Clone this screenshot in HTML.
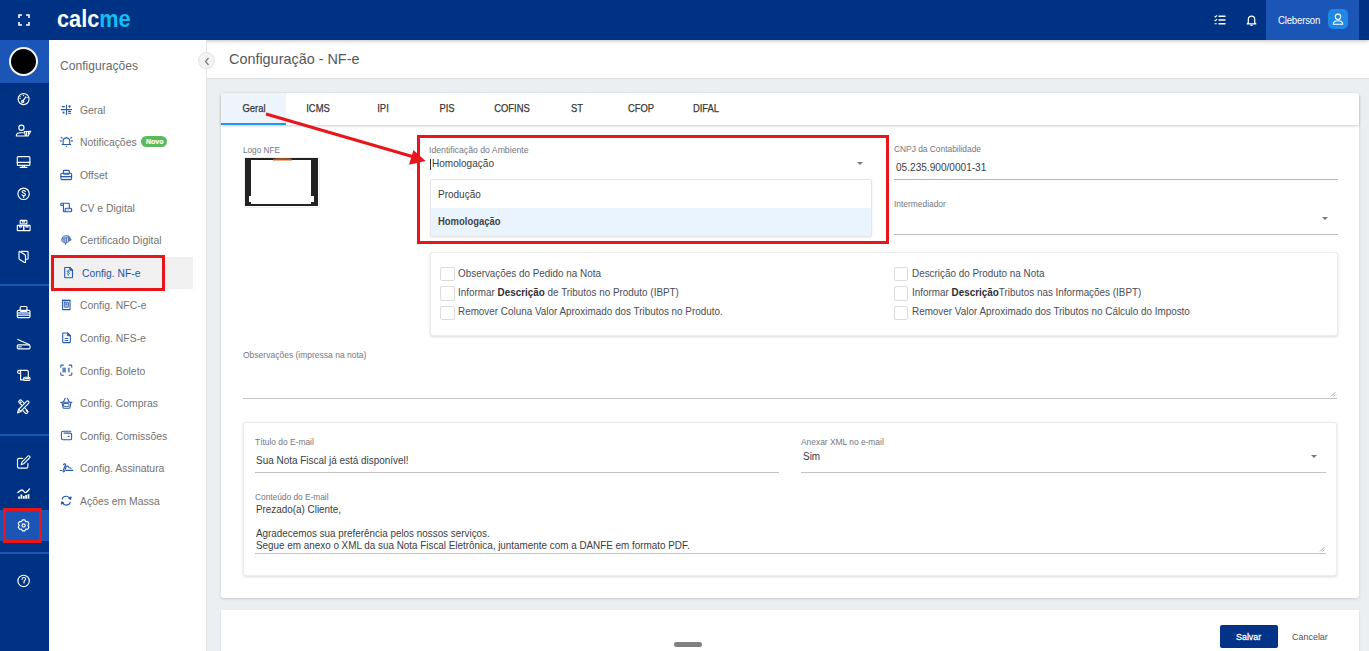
<!DOCTYPE html>
<html><head><meta charset="utf-8"><title>calcme</title><style>
*{margin:0;padding:0;box-sizing:border-box}
html,body{width:1369px;height:651px;overflow:hidden;background:#eceff1;font-family:"Liberation Sans",sans-serif}
.abs{position:absolute}
.t{position:absolute;white-space:nowrap;line-height:1;transform-origin:0 0}
#topbar{position:absolute;left:0;top:0;width:1369px;height:40px;background:#003283;box-shadow:0 1px 4px rgba(0,0,0,0.25)}
#rail{position:absolute;left:0;top:40px;width:49px;height:611px;background:#003283}
#sidebar{position:absolute;left:49px;top:40px;width:157.5px;height:611px;background:#fff;border-right:1px solid #e4e4e4}
#mainhead{position:absolute;left:206.5px;top:40px;width:1163px;height:39px;background:#fff;border-bottom:1px solid #dde1e4}
#card{background:#fff;border-radius:3px;box-shadow:0 1px 3px rgba(0,0,0,0.15)}
.box{background:#fff;border:1px solid #ececec;border-radius:3px;box-shadow:0 1px 3px rgba(0,0,0,0.14)}
.cb{width:14.6px;height:14.2px;border:1px solid #dcdcdc;border-radius:2px;background:#fff}
.arrow{position:absolute;width:0;height:0;border-left:3.5px solid transparent;border-right:3.5px solid transparent;border-top:3.5px solid #777}
b{font-weight:700;color:#2c2f36}
</style></head>
<body>
<div id="mainhead"></div>
<div id="topbar"></div><svg class="abs" style="left:17px;top:13px" width="14" height="14" viewBox="0 0 14 14" fill="none" stroke="#fff" stroke-width="1.6"><path d="M2 5V2h3M9 2h3v3M12 9v3H9M5 12H2V9"/></svg><div class="t" style="left:56.9px;top:7.08px;font-size:24px;font-weight:700;color:#fff;line-height:1;transform:scaleX(0.905);transform-origin:0 0">calc<span style="color:#12bff5">me</span></div><svg class="abs" style="left:1213.5px;top:15px" width="12" height="10" viewBox="0 0 12 10" fill="none" stroke="#fff" stroke-width="1.3"><path d="M4.5 1.2h7M4.5 5h7M4.5 8.8h7" stroke-width="1.6"/><path d="M.6 1.1l.9.9 1.5-1.6M.6 4.9l.9.9 1.5-1.6M.6 8.8h2.2" stroke-width="1.1"/></svg><svg class="abs" style="left:1245.5px;top:13.5px" width="11" height="12" viewBox="0 0 11 12" fill="none" stroke="#fff" stroke-width="1.2" stroke-linejoin="round"><path d="M2.3 8.8V5.3a3.2 3.2 0 0 1 6.4 0v3.5l1.2 1.1H1.1z"/><path d="M4.4 11.3h2.2" stroke-width="1.3"/></svg><div class="abs" style="left:1266px;top:0;width:93px;height:40px;background:#1b56b6"></div><div class="t" style="left:1277.50px;top:15.70px;font-size:10.27px;color:#fff;font-weight:400;transform:scaleX(0.9346);letter-spacing:-0.2px">Cleberson</div>
<div class="abs" style="left:1328px;top:9px;width:20px;height:20px;border-radius:5px;background:#1f88e6"></div><svg class="abs" style="left:1331px;top:12px" width="14" height="14" viewBox="0 0 14 14" fill="none" stroke="#fff" stroke-width="1.1" stroke-linejoin="round"><circle cx="7" cy="4.8" r="2.7"/><path d="M2.3 12.3c0-2.4 1.8-3.6 4.7-3.6s4.7 1.2 4.7 3.6z"/></svg><div id="rail"></div><div class="abs" style="left:0;top:40px;width:49px;height:43px;background:#1b56b6"></div><div class="abs" style="left:9px;top:47px;width:29px;height:29px;border-radius:50%;background:#000;border:2px solid #f4f4f4"></div><div class="abs" style="left:0;top:284px;width:49px;height:2px;background:#1d56b8"></div><div class="abs" style="left:0;top:434px;width:49px;height:2px;background:#1d56b8"></div><div class="abs" style="left:0;top:552px;width:49px;height:2px;background:#1d56b8"></div><div class="abs" style="left:0;top:510px;width:49px;height:31px;background:#1b56b6"></div><div class="abs" style="left:3px;top:508px;width:39px;height:35px;border:3px solid #e8151b"></div><svg class="abs" style="left:12px;top:88px" width="24" height="24" viewBox="0 0 24 24" fill="none" stroke="#fff" stroke-width="1.15" stroke-linecap="round" stroke-linejoin="round"><circle cx="11.6" cy="11.1" r="5.5"/><path d="M10.9 13.1L13.8 8.9"/><circle cx="10.7" cy="13.4" r="1.1"/><path d="M11.4 7.3v.3M7.9 8.1l.2.2M15.2 9.6l-.2.1M7.9 10.4h.3"/></svg><svg class="abs" style="left:12px;top:119px" width="24" height="24" viewBox="0 0 24 24" fill="none" stroke="#fff" stroke-width="1.15" stroke-linecap="round" stroke-linejoin="round"><circle cx="9.4" cy="8.7" r="2.6"/><path d="M4.3 17c0-2.3 1.6-3.3 3.8-3.3h3.2M4.3 17h8.8M12.3 12.5l6.4-.2-2.6 4.7h-2.6z M14.6 13v3.5M16.4 12.6v2"/></svg><svg class="abs" style="left:12px;top:150px" width="24" height="24" viewBox="0 0 24 24" fill="none" stroke="#fff" stroke-width="1.15" stroke-linecap="round" stroke-linejoin="round"><rect x="5.3" y="6.6" width="12.6" height="8.8" rx="1"/><path d="M5.3 12.4h12.6M8.2 17.4h6.8M10.8 15.4v2M12.4 15.4v2"/></svg><svg class="abs" style="left:12px;top:182px" width="24" height="24" viewBox="0 0 24 24" fill="none" stroke="#fff" stroke-width="1.15" stroke-linecap="round" stroke-linejoin="round"><circle cx="11.6" cy="11.8" r="5.7"/><path d="M13.3 9.4c-.3-.6-.9-.9-1.6-.9-1 0-1.6.5-1.6 1.2 0 1.6 3.3.9 3.3 2.7 0 .8-.8 1.4-1.7 1.4-.8 0-1.4-.4-1.7-1M11.7 14v1.4"/></svg><svg class="abs" style="left:12px;top:213px" width="24" height="24" viewBox="0 0 24 24" fill="none" stroke="#fff" stroke-width="1.15" stroke-linecap="round" stroke-linejoin="round"><rect x="8.2" y="7.3" width="6.7" height="3.6" rx=".4"/><rect x="5.3" y="12.4" width="6.4" height="5.2" rx=".4"/><rect x="11.7" y="12.4" width="6.4" height="5.2" rx=".4"/><path d="M10.4 7.3v1.5h2.3V7.3M7.5 12.4v1.5h2.1v-1.5M13.9 12.4v1.5h2.1v-1.5"/></svg><svg class="abs" style="left:12px;top:244px" width="24" height="24" viewBox="0 0 24 24" fill="none" stroke="#fff" stroke-width="1.15" stroke-linecap="round" stroke-linejoin="round"><path d="M9.2 7.3h6c.5 0 .9.4.9.9v6.2c0 .5-.4.8-.9.8h-1.5"/><path d="M7.8 7.4l4.8 3.2c.6.4.9.9.9 1.5v5.8c0 .5-.5.8-1 .5l-4.8-3c-.5-.3-.7-.7-.7-1.2V8c0-.5.4-.8.8-.6z"/></svg><svg class="abs" style="left:12px;top:300px" width="24" height="24" viewBox="0 0 24 24" fill="none" stroke="#fff" stroke-width="1.15" stroke-linecap="round" stroke-linejoin="round"><rect x="8.2" y="6.5" width="6.8" height="5" rx="1"/><rect x="5.3" y="10.4" width="12.7" height="7.2" rx="1"/><path d="M5.8 12.6h11.7M5.8 13.8h11.7" stroke-opacity=".6"/><path d="M5.8 15.2h11.7"/></svg><svg class="abs" style="left:12px;top:332px" width="24" height="24" viewBox="0 0 24 24" fill="none" stroke="#fff" stroke-width="1.15" stroke-linecap="round" stroke-linejoin="round"><path d="M5.8 7.4l11.3 5.2"/><rect x="5.3" y="12.9" width="12.7" height="3.9" rx="1"/><path d="M6.8 14.8h.6M8.6 14.8h.6"/></svg><svg class="abs" style="left:12px;top:363px" width="24" height="24" viewBox="0 0 24 24" fill="none" stroke="#fff" stroke-width="1.15" stroke-linecap="round" stroke-linejoin="round"><path d="M8.6 16.8V8.9a1.5 1.5 0 1 0-1.5 1.5H8.6M7.1 7.4h8c.7 0 1.2.5 1.2 1.2V14.1M8.6 16.8h3"/><rect x="11.6" y="14.2" width="6.4" height="3.2" rx="1.2"/><path d="M12.8 15.6h3.8"/></svg><svg class="abs" style="left:12px;top:395px" width="24" height="24" viewBox="0 0 24 24" fill="none" stroke="#fff" stroke-width="1.15" stroke-linecap="round" stroke-linejoin="round"><path d="M9.6 10.2L7.1 7.7a1.3 1.3 0 0 1 0-1.8l.5-.5a1.3 1.3 0 0 1 1.8 0l2.4 2.4M13.2 13.4l2.4 2.4a1.3 1.3 0 0 1 0 1.8l-.5.5a1.3 1.3 0 0 1-1.8 0l-2.4-2.4M8.3 6.8l.8.8M14.2 15.6l.8.8"/><path d="M5.6 18l.9-3.5 8.1-8.1a1.4 1.4 0 0 1 2 2L8.5 16.5z M7 14.6l2 2"/></svg><svg class="abs" style="left:12px;top:451px" width="24" height="24" viewBox="0 0 24 24" fill="none" stroke="#fff" stroke-width="1.15" stroke-linecap="round" stroke-linejoin="round"><path d="M10.6 7.3H7.1c-.9 0-1.6.7-1.6 1.6v6.6c0 .9.7 1.6 1.6 1.6h7.2c.9 0 1.6-.7 1.6-1.6v-3"/><path d="M9.2 13.7l.7-2.6 6-6c.5-.5 1.3-.5 1.7 0 .5.5.5 1.2 0 1.7l-6 6z"/></svg><svg class="abs" style="left:12px;top:482px" width="24" height="24" viewBox="0 0 24 24" fill="none" stroke="#fff" stroke-width="1.15" stroke-linecap="round" stroke-linejoin="round"><path d="M5.8 10.6c1.6-1.3 2.6-2.6 4.2-2.6 1.5 0 2 2.6 3.4 2.6 1.5 0 2.8-2.3 4.2-3.7" stroke-width="1.3"/><path d="M7 16.8v-2.4M9.4 16.8v-4.3M11.8 16.8v-2.8M14.1 16.8v-3.9M16.5 16.8v-4.6" stroke-width="1.8" stroke-linecap="butt"/></svg><svg class="abs" style="left:12px;top:513px" width="24" height="24" viewBox="0 0 24 24" fill="none" stroke="#fff" stroke-width="1.15" stroke-linecap="round" stroke-linejoin="round"><path d="M9.53 8.52 L10.34 6.94 L12.86 6.94 L13.67 8.52 L13.93 8.67 L15.70 8.58 L16.96 10.76 L16.00 12.25 L16.00 12.55 L16.96 14.04 L15.70 16.22 L13.93 16.13 L13.67 16.28 L12.86 17.86 L10.34 17.86 L9.53 16.28 L9.27 16.13 L7.50 16.22 L6.24 14.04 L7.20 12.55 L7.20 12.25 L6.24 10.76 L7.50 8.58 L9.27 8.67z"/><circle cx="11.6" cy="12.4" r="1.6"/></svg><svg class="abs" style="left:12px;top:569px" width="24" height="24" viewBox="0 0 24 24" fill="none" stroke="#fff" stroke-width="1.15" stroke-linecap="round" stroke-linejoin="round"><circle cx="11.6" cy="11.9" r="5.7"/><path d="M10.1 10.3c0-1 .8-1.8 1.8-1.8 1 0 1.7.7 1.7 1.6 0 1.2-1.6 1.4-1.6 2.6v1.3"/></svg><div id="sidebar"></div><div class="t" style="left:59.70px;top:60.04px;font-size:12.95px;color:#6d6a66;font-weight:400;transform:scaleX(0.9346);">Configurações</div>
<div class="t" style="left:79.60px;top:104.78px;font-size:11.13px;color:#737373;font-weight:400;transform:scaleX(0.9346);">Geral</div>
<div class="t" style="left:79.60px;top:137.38px;font-size:11.13px;color:#737373;font-weight:400;transform:scaleX(0.9346);">Notificações</div>
<div class="t" style="left:79.60px;top:169.98px;font-size:11.13px;color:#737373;font-weight:400;transform:scaleX(0.9346);">Offset</div>
<div class="t" style="left:79.60px;top:202.58px;font-size:11.13px;color:#737373;font-weight:400;transform:scaleX(0.9346);">CV e Digital</div>
<div class="t" style="left:79.60px;top:235.18px;font-size:11.13px;color:#737373;font-weight:400;transform:scaleX(0.9346);">Certificado Digital</div>
<div class="abs" style="left:49px;top:257px;width:144px;height:32px;background:#f0f0f0"></div><div class="t" style="left:81.80px;top:267.87px;font-size:11.02px;color:#2455a4;font-weight:400;transform:scaleX(0.9346);">Config. NF-e</div>
<div class="t" style="left:79.60px;top:300.38px;font-size:11.13px;color:#737373;font-weight:400;transform:scaleX(0.9346);">Config. NFC-e</div>
<div class="t" style="left:79.60px;top:332.98px;font-size:11.13px;color:#737373;font-weight:400;transform:scaleX(0.9346);">Config. NFS-e</div>
<div class="t" style="left:79.60px;top:365.58px;font-size:11.13px;color:#737373;font-weight:400;transform:scaleX(0.9346);">Config. Boleto</div>
<div class="t" style="left:79.60px;top:398.18px;font-size:11.13px;color:#737373;font-weight:400;transform:scaleX(0.9346);">Config. Compras</div>
<div class="t" style="left:79.60px;top:430.78px;font-size:11.13px;color:#737373;font-weight:400;transform:scaleX(0.9346);">Config. Comissões</div>
<div class="t" style="left:79.60px;top:463.38px;font-size:11.13px;color:#737373;font-weight:400;transform:scaleX(0.9346);">Config. Assinatura</div>
<div class="t" style="left:79.60px;top:495.98px;font-size:11.13px;color:#737373;font-weight:400;transform:scaleX(0.9346);">Ações em Massa</div>
<svg class="abs" style="left:56px;top:100px" width="22" height="22" viewBox="0 0 22 22" fill="none" stroke="#2a5aac" stroke-width="1.1" stroke-linecap="round" stroke-linejoin="round"><path d="M10.5 5v9.6M5.3 9.6h10.2M6.3 6.6h2.2M12.4 11.5h2.2M12.4 13.2h2.2"/><path d="M12.8 6h1.6l-.8 1.3z" fill="#2a5aac"/><rect x="6.6" y="11.6" width="1.9" height="1.9" fill="#2a5aac" stroke="none"/></svg><svg class="abs" style="left:56px;top:132px" width="22" height="22" viewBox="0 0 22 22" fill="none" stroke="#2a5aac" stroke-width="1.1" stroke-linecap="round" stroke-linejoin="round"><path d="M6.2 12.5h8.6M7.1 12.5V9.2a3.3 3.3 0 0 1 6.6 0v3.3M10.4 5.3v.6M10.3 14.2v.3M5.2 5.3l.9.9M15.6 5.3l-.9.9M4.3 8.9h1.1M15.4 8.9h1.1"/></svg><svg class="abs" style="left:56px;top:165px" width="22" height="22" viewBox="0 0 22 22" fill="none" stroke="#2a5aac" stroke-width="1.1" stroke-linecap="round" stroke-linejoin="round"><rect x="7.4" y="5.4" width="5.9" height="3.9" rx=".8"/><rect x="4.9" y="8.3" width="10.7" height="6.3" rx="1"/><path d="M5.2 11.5h10.2"/><path d="M5.4 12.4h9.8" stroke-opacity=".35" stroke-width="1.6"/></svg><svg class="abs" style="left:56px;top:198px" width="22" height="22" viewBox="0 0 22 22" fill="none" stroke="#2a5aac" stroke-width="1.1" stroke-linecap="round" stroke-linejoin="round"><path d="M7.4 13V5.3M4.8 7.2V6.2c0-.5.4-.9.9-.9h6.7c.5 0 .9.4.9.9v3.9M4.8 7.2h2.6M7.4 13c0 .5.4.8.9.8h1"/><rect x="9.1" y="10.3" width="6.5" height="3.4" rx="1"/><path d="M10.4 12h3.8" stroke-opacity=".4"/></svg><svg class="abs" style="left:56px;top:230px" width="22" height="22" viewBox="0 0 22 22" fill="none" stroke="#2a5aac" stroke-width="1.1" stroke-linecap="round" stroke-linejoin="round"><path d="M5.2 10.2c0-3 2.4-5 5.4-5 2.5 0 4 1.4 4.3 3.4l1 1.3-1.6.8c-.8.6-2.3 1.8-3.6 2.5l-1.5 2.3-.5-2.2c-1.4-.6-3.5-1.3-3.5-3.1z" fill="#2a5aac" fill-opacity=".8" stroke="none"/><path d="M7.6 7.4c1.2-.8 2.7-.9 4-.3M7 9.6v1.8M9.2 8.6v3.6M11.4 8.6v3.2" stroke="#fff" stroke-width=".7"/></svg><svg class="abs" style="left:58px;top:262px" width="22" height="22" viewBox="0 0 22 22" fill="none" stroke="#2a5aac" stroke-width="1.1" stroke-linecap="round" stroke-linejoin="round"><path d="M7.2 5.5h4.7l2.6 2.6v7.1c0 .3-.2.5-.5.5H7.2c-.3 0-.5-.2-.5-.5V6c0-.3.2-.5.5-.5z"/><path d="M11.9 5.5v2.6h2.6" fill="#2a5aac"/><path d="M11.3 9.4c-.3-.4-.7-.5-1.1-.5-.6 0-1 .3-1 .8 0 1 2.2.6 2.2 1.7 0 .5-.5.9-1.1.9-.5 0-.9-.2-1.1-.6M10.2 8.3v.6M10.2 12.8v.6" stroke-width=".9"/></svg><svg class="abs" style="left:56px;top:295px" width="22" height="22" viewBox="0 0 22 22" fill="none" stroke="#2a5aac" stroke-width="1.1" stroke-linecap="round" stroke-linejoin="round"><path d="M6.6 5.2h7.4v9.4H6.6z"/><path d="M6.6 5.2l1 .6 1-.6 1 .6 1-.6 1 .6 1-.6 1 .6" /><rect x="8.3" y="7.2" width="4.1" height="5" rx=".4" stroke-width=".9"/><rect x="9.2" y="8.3" width="2.3" height="1.5" fill="#2a5aac" stroke="none"/><path d="M9.2 11h2.3" stroke-width=".8"/></svg><svg class="abs" style="left:56px;top:327px" width="22" height="22" viewBox="0 0 22 22" fill="none" stroke="#2a5aac" stroke-width="1.1" stroke-linecap="round" stroke-linejoin="round"><path d="M7.3 6h4.4l2.6 2.6v6.4c0 .3-.2.6-.6.6H7.3c-.3 0-.6-.3-.6-.6V6.6c0-.3.3-.6.6-.6z"/><path d="M11.7 6v2.6h2.6" fill="#2a5aac"/><path d="M9 11.5h2.9M9 13.5h2.9" stroke-width=".9"/></svg><svg class="abs" style="left:56px;top:360px" width="22" height="22" viewBox="0 0 22 22" fill="none" stroke="#2a5aac" stroke-width="1.1" stroke-linecap="round" stroke-linejoin="round"><path d="M4.8 7.3V6c0-.5.4-.9.9-.9h1.7M13.2 5.1h1.7c.5 0 .9.4.9.9v1.3M15.8 12.9v1.5c0 .5-.4.9-.9.9h-1.7M7.4 15.3H5.7c-.5 0-.9-.4-.9-.9v-1.5"/><rect x="6.4" y="7.6" width="3.5" height="4.8" fill="#2a5aac" fill-opacity=".75" stroke="none"/><rect x="11.9" y="7.8" width="1.8" height="4.4" fill="#2a5aac" fill-opacity=".75" stroke="none"/></svg><svg class="abs" style="left:56px;top:392px" width="22" height="22" viewBox="0 0 22 22" fill="none" stroke="#2a5aac" stroke-width="1.1" stroke-linecap="round" stroke-linejoin="round"><path d="M4.7 10.2h11.1M5.8 10.2l1.3 5.4c.1.4.4.7.8.7h5.2c.4 0 .7-.3.8-.7l1.2-5.4M7.4 10l1.8-3.8M13.2 10l-1.8-3.8"/><rect x="7.6" y="11.5" width="5.4" height="2.9" rx=".3" stroke-width=".9"/></svg><svg class="abs" style="left:56px;top:425px" width="22" height="22" viewBox="0 0 22 22" fill="none" stroke="#2a5aac" stroke-width="1.1" stroke-linecap="round" stroke-linejoin="round"><path d="M14.8 6.2H7.2c-1 0-1.8.8-1.8 1.8v5c0 1 .8 1.8 1.8 1.8h7c.8 0 1.4-.6 1.4-1.4V9.5c0-.8-.6-1.4-1.4-1.4H8"/><path d="M12.3 11.4h.8" stroke-width="1.2"/></svg><svg class="abs" style="left:56px;top:457px" width="22" height="22" viewBox="0 0 22 22" fill="none" stroke="#2a5aac" stroke-width="1.1" stroke-linecap="round" stroke-linejoin="round"><path d="M4.3 13.5h1.3M7.5 7.6c.8-1 2.4-1 2 .5L7.3 13c-.8 1.6.2 2.4 1.1 1.4.8-1 1-2.9 1.6-4.6.5-1.2 1.7-1 2.4-.3.3.4 0 1.1.8 1.3l2 .4M10.2 13.4h6.6"/></svg><svg class="abs" style="left:56px;top:490px" width="22" height="22" viewBox="0 0 22 22" fill="none" stroke="#2a5aac" stroke-width="1.1" stroke-linecap="round" stroke-linejoin="round"><path d="M6.2 9.1C6.6 7.5 8.2 6.2 10.2 6.2c1.7 0 3 .8 3.7 2.2M14.2 12.3c-.5 1.5-2 2.8-3.9 2.8-1.8 0-3.2-.9-3.8-2.3"/><path d="M12.8 8.2l1.9 1.1.4-2.2z M7.7 12.9l-1.9-1.1-.4 2.2z" fill="#2a5aac"/></svg><div class="abs" style="left:141.4px;top:136.2px;width:25.4px;height:11px;border-radius:6px;background:#5cb85c"></div><div class="t" style="left:145.80px;top:138.36px;font-size:7.49px;color:#fff;font-weight:700;transform:scaleX(0.9346);-webkit-text-stroke:0.2px #fff">Novo</div>
<div class="abs" style="left:51px;top:255px;width:114px;height:36px;border:3px solid #e8151b"></div><div class="abs" style="left:197.5px;top:52.2px;width:17px;height:17px;border-radius:50%;background:#f3f3f3;border:1px solid #e2e2e2;box-sizing:border-box"></div><svg class="abs" style="left:202.5px;top:56.5px" width="8" height="9" viewBox="0 0 8 9" fill="none" stroke="#777" stroke-width="1.2"><path d="M5.5 1L2.5 4.5 5.5 8"/></svg><div class="t" style="left:228.80px;top:50.76px;font-size:15.41px;color:#55575c;font-weight:400;transform:scaleX(0.9346);">Configuração - NF-e</div>
<div class="abs" id="card" style="left:221px;top:93px;width:1138px;height:504.8px"></div><div class="abs" style="left:221px;top:93px;width:1138px;height:32px;background:#fff;box-shadow:0 1px 3px rgba(0,0,0,0.2);border-radius:3px 3px 0 0"></div><div class="abs" style="left:221px;top:93px;width:65px;height:32px;background:#eef4fc;border-radius:3px 0 0 0"></div><div class="abs" style="left:221px;top:123px;width:65px;height:2px;background:#2196f3"></div><div class="t" style="left:213.50px;width:80px;text-align:center;top:102.93px;font-size:10.6px;color:#383838;transform:scaleX(0.89);transform-origin:50% 0;-webkit-text-stroke:0.25px #383838">Geral</div><div class="t" style="left:278.10px;width:80px;text-align:center;top:102.93px;font-size:10.6px;color:#383838;transform:scaleX(0.89);transform-origin:50% 0;-webkit-text-stroke:0.25px #383838">ICMS</div><div class="t" style="left:342.70px;width:80px;text-align:center;top:102.93px;font-size:10.6px;color:#383838;transform:scaleX(0.89);transform-origin:50% 0;-webkit-text-stroke:0.25px #383838">IPI</div><div class="t" style="left:407.30px;width:80px;text-align:center;top:102.93px;font-size:10.6px;color:#383838;transform:scaleX(0.89);transform-origin:50% 0;-webkit-text-stroke:0.25px #383838">PIS</div><div class="t" style="left:471.90px;width:80px;text-align:center;top:102.93px;font-size:10.6px;color:#383838;transform:scaleX(0.89);transform-origin:50% 0;-webkit-text-stroke:0.25px #383838">COFINS</div><div class="t" style="left:536.50px;width:80px;text-align:center;top:102.93px;font-size:10.6px;color:#383838;transform:scaleX(0.89);transform-origin:50% 0;-webkit-text-stroke:0.25px #383838">ST</div><div class="t" style="left:601.10px;width:80px;text-align:center;top:102.93px;font-size:10.6px;color:#383838;transform:scaleX(0.89);transform-origin:50% 0;-webkit-text-stroke:0.25px #383838">CFOP</div><div class="t" style="left:665.70px;width:80px;text-align:center;top:102.93px;font-size:10.6px;color:#383838;transform:scaleX(0.89);transform-origin:50% 0;-webkit-text-stroke:0.25px #383838">DIFAL</div><div class="t" style="left:243.00px;top:145.56px;font-size:9.02px;color:#737886;font-weight:400;transform:scaleX(0.9091);">Logo NFE</div>
<div class="abs" style="left:244.8px;top:157.7px;width:73.5px;height:48.3px;background:#222"></div><div class="abs" style="left:251px;top:160.2px;width:60px;height:44.2px;background:#fff"></div><div class="abs" style="left:273px;top:158px;width:19px;height:2.5px;background:#ea7a36;border-radius:50% 50% 0 0;opacity:.6"></div><div class="abs" style="left:243.5px;top:156.5px;width:76px;height:51px;border:1px solid #f0f0f0"></div><div class="abs" style="left:248.5px;top:196px;width:3px;height:5.5px;background:#fff"></div><div class="abs" style="left:310.5px;top:196px;width:3px;height:5.5px;background:#fff"></div><div class="t" style="left:428.90px;top:145.00px;font-size:9.57px;color:#737886;font-weight:400;transform:scaleX(0.9091);">Identificação do Ambiente</div>
<div class="abs" style="left:430px;top:158.5px;width:1px;height:11.5px;background:#333"></div><div class="t" style="left:431.50px;top:158.00px;font-size:10.75px;color:#3a3d45;font-weight:400;transform:scaleX(0.9346);">Homologação</div>
<div class="arrow" style="left:856.5px;top:162px"></div><div class="abs" style="left:429.5px;top:179.2px;width:442px;height:58.3px;background:#fff;border:1px solid #e6e6e6;box-sizing:border-box;border-radius:2px;box-shadow:0 1px 2px rgba(0,0,0,0.08)"></div><div class="abs" style="left:430.5px;top:207.6px;width:440px;height:28px;background:#eaf4fe"></div><div class="t" style="left:438.40px;top:189.34px;font-size:10.70px;color:#3c3c3c;font-weight:400;transform:scaleX(0.9346);">Produção</div>
<div class="t" style="left:438.40px;top:216.52px;font-size:10.13px;color:#444;font-weight:700;transform:scaleX(0.9346);">Homologação</div>
<div class="t" style="left:893.80px;top:145.31px;font-size:9.21px;color:#737886;font-weight:400;transform:scaleX(0.9091);">CNPJ da Contabilidade</div>
<div class="t" style="left:895.50px;top:161.86px;font-size:10.80px;color:#3a3d45;font-weight:400;transform:scaleX(0.9346);">05.235.900/0001-31</div>
<div class="abs" style="left:894px;top:179px;width:443.5px;height:1.2px;background:#8fd19e"></div><div class="t" style="left:893.80px;top:200.08px;font-size:9.24px;color:#737886;font-weight:400;transform:scaleX(0.9091);">Intermediador</div>
<div class="abs" style="left:894px;top:234px;width:443.5px;height:1px;background:#bdbdbd"></div><div class="arrow" style="left:1322px;top:216.5px"></div><div class="abs" style="left:417px;top:135px;width:472px;height:109px;border:3px solid #e8151b"></div><svg class="abs" style="left:0;top:0" width="1369" height="651"><line x1="266" y1="114" x2="414" y2="157" stroke="#e8151b" stroke-width="3"/><polygon points="425.5,161 413.5,150 409,164.8" fill="#e8151b"/></svg><div class="abs box" style="left:429.5px;top:252.4px;width:908px;height:84px"></div><div class="abs cb" style="left:440px;top:267.3px"></div><div class="t" style="left:458.40px;top:268.03px;font-size:10.59px;color:#4a4d55;font-weight:400;transform:scaleX(0.9346);">Observações do Pedido na Nota</div>
<div class="abs cb" style="left:893.6px;top:267.3px"></div><div class="t" style="left:912.10px;top:268.03px;font-size:10.59px;color:#4a4d55;font-weight:400;transform:scaleX(0.9346);">Descrição do Produto na Nota</div>
<div class="abs cb" style="left:440px;top:286.4px"></div><div class="t" style="left:458.40px;top:287.13px;font-size:10.59px;color:#4a4d55;font-weight:400;transform:scaleX(0.9346);">Informar <b>Descrição</b> de Tributos no Produto (IBPT)</div>
<div class="abs cb" style="left:893.6px;top:286.4px"></div><div class="t" style="left:912.10px;top:287.13px;font-size:10.59px;color:#4a4d55;font-weight:400;transform:scaleX(0.9346);">Informar <b>Descrição</b>Tributos nas Informações (IBPT)</div>
<div class="abs cb" style="left:440px;top:305.5px"></div><div class="t" style="left:458.40px;top:306.23px;font-size:10.59px;color:#4a4d55;font-weight:400;transform:scaleX(0.9346);">Remover Coluna Valor Aproximado dos Tributos no Produto.</div>
<div class="abs cb" style="left:893.6px;top:305.5px"></div><div class="t" style="left:912.10px;top:306.23px;font-size:10.59px;color:#4a4d55;font-weight:400;transform:scaleX(0.9346);">Remover Valor Aproximado dos Tributos no Cálculo do Imposto</div>
<div class="t" style="left:242.70px;top:350.87px;font-size:9.37px;color:#737886;font-weight:400;transform:scaleX(0.9091);">Observações (impressa na nota)</div>
<div class="abs" style="left:242.7px;top:397.8px;width:1094px;height:1px;background:#c4c4c4"></div><svg class="abs" style="left:1330px;top:391px" width="6" height="6" viewBox="0 0 6 6" stroke="#999" stroke-width=".8"><path d="M5.5 1L1 5.5M5.5 3.5L3.5 5.5"/></svg><div class="abs box" style="left:243.4px;top:421.5px;width:1093.4px;height:154.5px"></div><div class="t" style="left:254.50px;top:438.38px;font-size:9.24px;color:#737886;font-weight:400;transform:scaleX(0.9091);">Título do E-mail</div>
<div class="t" style="left:255.70px;top:454.79px;font-size:10.65px;color:#3a3d45;font-weight:400;transform:scaleX(0.9346);">Sua Nota Fiscal já está disponível!</div>
<div class="abs" style="left:254.5px;top:472px;width:524.4px;height:1px;background:#c4c4c4"></div><div class="t" style="left:801.00px;top:438.38px;font-size:9.24px;color:#737886;font-weight:400;transform:scaleX(0.9091);">Anexar XML no e-mail</div>
<div class="t" style="left:802.60px;top:450.99px;font-size:10.65px;color:#3a3d45;font-weight:400;transform:scaleX(0.9346);">Sim</div>
<div class="abs" style="left:801px;top:472px;width:524.6px;height:1px;background:#c4c4c4"></div><div class="arrow" style="left:1310.5px;top:455px"></div><div class="t" style="left:254.50px;top:492.93px;font-size:9.17px;color:#737886;font-weight:400;transform:scaleX(0.9091);">Conteúdo do E-mail</div>
<div class="t" style="left:255.70px;top:504.35px;font-size:10.57px;color:#3a3d45;font-weight:400;transform:scaleX(0.9346);">Prezado(a) Cliente,</div>
<div class="t" style="left:255.70px;top:527.89px;font-size:10.57px;color:#3a3d45;font-weight:400;transform:scaleX(0.9346);">Agradecemos sua preferência pelos nossos serviços.</div>
<div class="t" style="left:255.70px;top:539.66px;font-size:10.57px;color:#3a3d45;font-weight:400;transform:scaleX(0.9346);">Segue em anexo o XML da sua Nota Fiscal Eletrônica, juntamente com a DANFE em formato PDF.</div>
<div class="abs" style="left:254.5px;top:553px;width:1071px;height:1px;background:#c4c4c4"></div><svg class="abs" style="left:1319px;top:546px" width="6" height="6" viewBox="0 0 6 6" stroke="#999" stroke-width=".8"><path d="M5.5 1L1 5.5M5.5 3.5L3.5 5.5"/></svg><div class="abs" style="left:221px;top:609.5px;width:1138px;height:60px;background:#fff;border-radius:0;box-shadow:0 1px 2px rgba(0,0,0,0.12)"></div><div class="abs" style="left:674px;top:641.5px;width:28px;height:5px;border-radius:3px;background:#808080"></div><div class="abs" style="left:1219.8px;top:624.6px;width:58px;height:23.3px;border-radius:2px;background:#033386"></div><div class="t" style="left:1236.20px;top:631.91px;font-size:9.79px;color:#fff;font-weight:400;transform:scaleX(0.9091);-webkit-text-stroke:0.3px #fff">Salvar</div>
<div class="t" style="left:1292.40px;top:632.09px;font-size:9.58px;color:#4f4f4f;font-weight:400;transform:scaleX(0.9346);">Cancelar</div>

</body></html>
